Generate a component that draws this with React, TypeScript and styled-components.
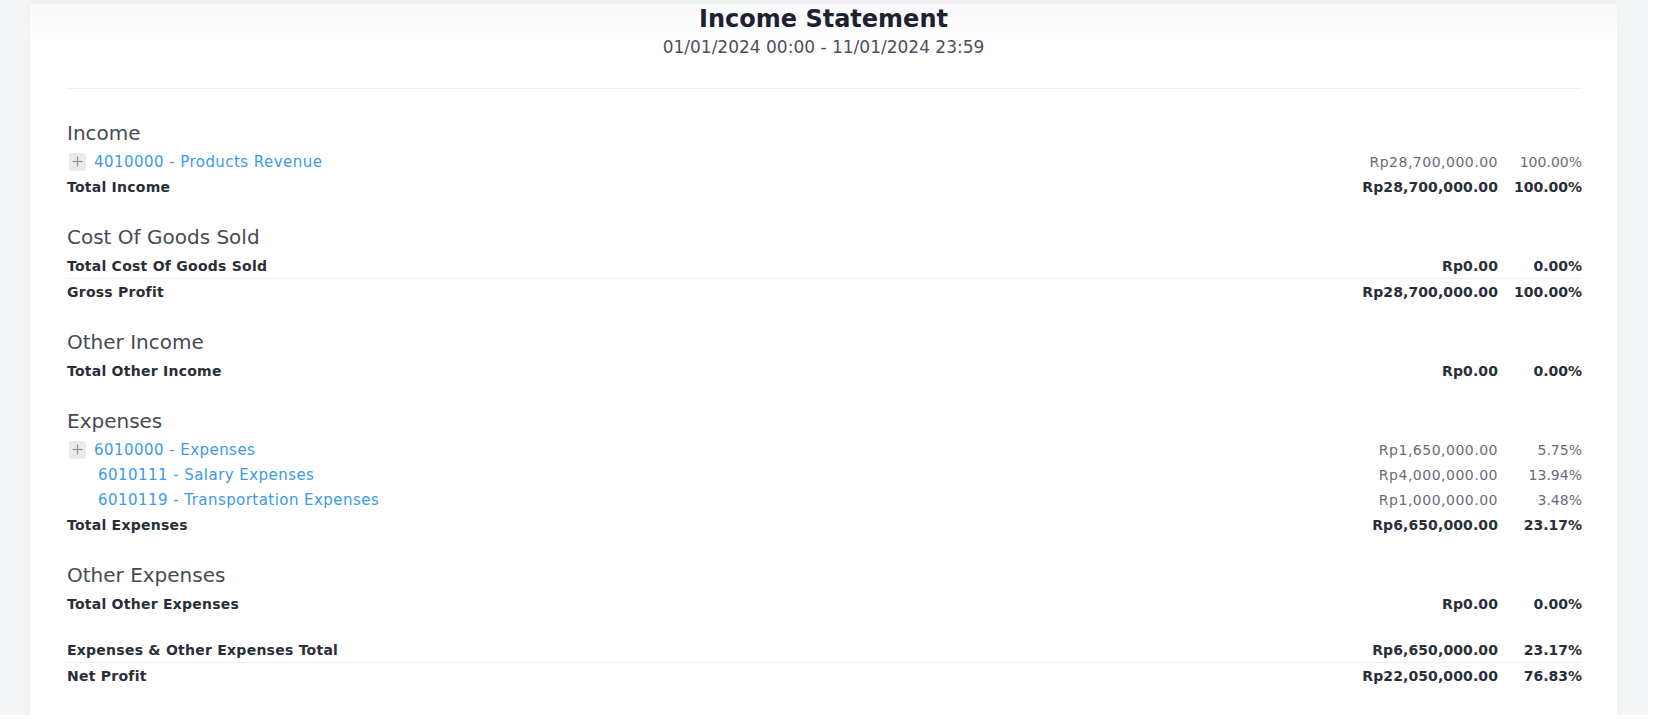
import React from 'react';
import styled, { createGlobalStyle } from 'styled-components';

const GlobalStyle = createGlobalStyle`
  html, body { margin: 0; padding: 0; background: #ffffff; }
  body { font-family: "DejaVu Sans", "Noto Sans", sans-serif; -webkit-font-smoothing: antialiased; }
  * { box-sizing: border-box; }
`;

const Viewport = styled.div`
  width: 1648px;
  height: 715px;
  background: #f3f4f6;
  padding: 4px 31px 0 30px;
  overflow: hidden;
`;

const Card = styled.div`
  background: linear-gradient(#f8f9fa 0, #ffffff 40px);
  min-height: 730px;
  box-shadow: 0 -2px 6px rgba(0, 0, 0, 0.03);
`;

const Header = styled.header`
  display: flex;
  flex-direction: column;
  align-items: center;
`;

const Title = styled.h1`
  margin: 0;
  font-size: 24px;
  line-height: 30px;
  font-weight: 700;
  color: #1d2132;
`;

const DateRange = styled.div`
  font-size: 17px;
  line-height: 26px;
  color: #4b4f5c;
`;

const Divider = styled.hr`
  margin: 28px 35px 0 37px;
  border: 0;
  border-top: 1px solid #eef0f3;
`;

const Body = styled.div`
  padding: 6px 35px 40px 37px;
`;

const Section = styled.section<{ $summary?: boolean }>`
  margin-top: ${(p) => (p.$summary ? '21px' : '23px')};
`;

const Heading = styled.h2`
  margin: 0;
  font-size: 20px;
  line-height: 31px;
  font-weight: 400;
  color: #464a55;
`;

const Row = styled.div<{ $bold?: boolean; $divider?: boolean }>`
  display: grid;
  grid-template-columns: 1fr 220px 84px;
  align-items: center;
  height: ${(p) => (p.$divider ? '26px' : '25px')};
  border-top: ${(p) => (p.$divider ? '1px solid #eceef1' : 'none')};
  font-size: 14px;
  font-weight: ${(p) => (p.$bold ? 700 : 400)};
  color: ${(p) => (p.$bold ? '#2a2e39' : '#686c78')};
`;

const Label = styled.div<{ $indent?: boolean; $bold?: boolean }>`
  display: flex;
  align-items: center;
  gap: 8px;
  padding-left: ${(p) => (p.$indent ? '31px' : '0')};
  letter-spacing: ${(p) => (p.$bold ? '0.25px' : '0')};
`;

const AccountLink = styled.a`
  color: #3d9ae8;
  text-decoration: none;
  font-size: 15px;
  letter-spacing: 0.45px;
`;

const PlusBox = styled.span`
  display: inline-flex;
  align-items: center;
  justify-content: center;
  width: 17px;
  height: 18px;
  margin-left: 2px;
  border-radius: 3px;
  background: #e9eaec;
  color: #8e9199;
`;

const Amount = styled.div<{ $bold?: boolean }>`
  text-align: right;
  letter-spacing: ${(p) => (p.$bold ? '0.1px' : '0.5px')};
`;

const Percent = styled.div`
  text-align: right;
`;

const Plus = () => (
  <svg width="11" height="11" viewBox="0 0 11 11" fill="none" stroke="currentColor" strokeWidth="1.2">
    <line x1="5.5" y1="0.5" x2="5.5" y2="10.5" />
    <line x1="0.5" y1="5.5" x2="10.5" y2="5.5" />
  </svg>
);

type Line = {
  label: string;
  amount: string;
  percent: string;
  kind: 'account' | 'child' | 'total';
  divider?: boolean;
};

type SectionData = { title?: string; lines: Line[] };

const sections: SectionData[] = [
  {
    title: 'Income',
    lines: [
      { label: '4010000 - Products Revenue', amount: 'Rp28,700,000.00', percent: '100.00%', kind: 'account' },
      { label: 'Total Income', amount: 'Rp28,700,000.00', percent: '100.00%', kind: 'total' },
    ],
  },
  {
    title: 'Cost Of Goods Sold',
    lines: [
      { label: 'Total Cost Of Goods Sold', amount: 'Rp0.00', percent: '0.00%', kind: 'total' },
      { label: 'Gross Profit', amount: 'Rp28,700,000.00', percent: '100.00%', kind: 'total', divider: true },
    ],
  },
  {
    title: 'Other Income',
    lines: [{ label: 'Total Other Income', amount: 'Rp0.00', percent: '0.00%', kind: 'total' }],
  },
  {
    title: 'Expenses',
    lines: [
      { label: '6010000 - Expenses', amount: 'Rp1,650,000.00', percent: '5.75%', kind: 'account' },
      { label: '6010111 - Salary Expenses', amount: 'Rp4,000,000.00', percent: '13.94%', kind: 'child' },
      { label: '6010119 - Transportation Expenses', amount: 'Rp1,000,000.00', percent: '3.48%', kind: 'child' },
      { label: 'Total Expenses', amount: 'Rp6,650,000.00', percent: '23.17%', kind: 'total' },
    ],
  },
  {
    title: 'Other Expenses',
    lines: [{ label: 'Total Other Expenses', amount: 'Rp0.00', percent: '0.00%', kind: 'total' }],
  },
  {
    lines: [
      { label: 'Expenses & Other Expenses Total', amount: 'Rp6,650,000.00', percent: '23.17%', kind: 'total' },
      { label: 'Net Profit', amount: 'Rp22,050,000.00', percent: '76.83%', kind: 'total', divider: true },
    ],
  },
];

const StatementLine = ({ line }: { line: Line }) => {
  const bold = line.kind === 'total';
  return (
    <Row $bold={bold} $divider={line.divider}>
      <Label $indent={line.kind === 'child'} $bold={bold}>
        {line.kind === 'account' && (
          <PlusBox>
            <Plus />
          </PlusBox>
        )}
        {bold ? line.label : <AccountLink href="#">{line.label}</AccountLink>}
      </Label>
      <Amount $bold={bold}>{line.amount}</Amount>
      <Percent>{line.percent}</Percent>
    </Row>
  );
};

export default function App() {
  return (
    <>
      <GlobalStyle />
      <Viewport>
        <Card>
          <Header>
            <Title>Income Statement</Title>
            <DateRange>01/01/2024 00:00 - 11/01/2024 23:59</DateRange>
          </Header>
          <Divider />
          <Body>
            {sections.map((s, i) => (
              <Section key={i} $summary={!s.title}>
                {s.title && <Heading>{s.title}</Heading>}
                {s.lines.map((l) => (
                  <StatementLine key={l.label} line={l} />
                ))}
              </Section>
            ))}
          </Body>
        </Card>
      </Viewport>
    </>
  );
}
